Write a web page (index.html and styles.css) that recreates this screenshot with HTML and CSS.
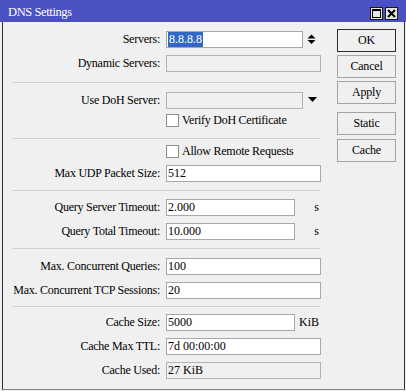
FILE: index.html
```html
<!DOCTYPE html>
<html>
<head>
<meta charset="utf-8">
<title>DNS Settings</title>
<link rel="stylesheet" href="styles.css">
</head>
<body>
<div class="window">
  <div class="titlebar">
    <span class="title">DNS Settings</span>
    <div class="tbtns">
      <span class="tb">
        <svg width="11" height="11" viewBox="0 0 11 11"><rect x="1.5" y="1.5" width="8" height="8" fill="none" stroke="#000" stroke-width="1"/><rect x="1" y="1" width="9" height="2" fill="#000"/></svg>
      </span>
      <span class="tb">
        <svg width="11" height="11" viewBox="0 0 11 11"><path d="M2 2 L9 9 M9 2 L2 9" stroke="#000" stroke-width="2"/></svg>
      </span>
    </div>
  </div>
  <div class="frame">
    <div class="form">
      <div class="row">
        <span class="label">Servers:</span>
        <div class="field">
          <span class="input mid"><span class="sel">8.8.8.8</span></span>
          <svg class="spin" width="9" height="11" viewBox="0 0 9 11"><path d="M0.5 4.5 L8.5 4.5 L4.5 0.5 Z M0.5 6 L8.5 6 L4.5 10 Z" fill="#000"/></svg>
        </div>
      </div>
      <div class="row">
        <span class="label">Dynamic Servers:</span>
        <div class="field"><span class="input full disabled"></span></div>
      </div>
      <div class="sep s1"></div>
      <div class="row">
        <span class="label">Use DoH Server:</span>
        <div class="field">
          <span class="input mid disabled"></span>
          <svg class="drop" width="9" height="5" viewBox="0 0 9 5"><path d="M0 0 L9 0 L4.5 5 Z" fill="#000"/></svg>
        </div>
      </div>
      <div class="cbrow verify"><span class="cb"></span><span>Verify DoH Certificate</span></div>
      <div class="sep s2"></div>
      <div class="cbrow allow"><span class="cb"></span><span>Allow Remote Requests</span></div>
      <div class="row">
        <span class="label">Max UDP Packet Size:</span>
        <div class="field"><span class="input full">512</span></div>
      </div>
      <div class="sep s3"></div>
      <div class="row">
        <span class="label">Query Server Timeout:</span>
        <div class="field"><span class="input short">2.000</span><span class="unit">s</span></div>
      </div>
      <div class="row">
        <span class="label">Query Total Timeout:</span>
        <div class="field"><span class="input short">10.000</span><span class="unit">s</span></div>
      </div>
      <div class="sep s4"></div>
      <div class="row">
        <span class="label">Max. Concurrent Queries:</span>
        <div class="field"><span class="input full">100</span></div>
      </div>
      <div class="row">
        <span class="label">Max. Concurrent TCP Sessions:</span>
        <div class="field"><span class="input full">20</span></div>
      </div>
      <div class="sep s5"></div>
      <div class="row">
        <span class="label">Cache Size:</span>
        <div class="field"><span class="input short">5000</span><span class="unit">KiB</span></div>
      </div>
      <div class="row">
        <span class="label">Cache Max TTL:</span>
        <div class="field"><span class="input full">7d 00:00:00</span></div>
      </div>
      <div class="row">
        <span class="label">Cache Used:</span>
        <div class="field"><span class="input full disabled">27 KiB</span></div>
      </div>
    </div>
    <div class="buttons">
      <div class="btn default">OK</div>
      <div class="btn">Cancel</div>
      <div class="btn">Apply</div>
      <div class="btn gapped">Static</div>
      <div class="btn">Cache</div>
    </div>
  </div>
</div>
</body>
</html>
```
FILE: styles.css
```css
* { box-sizing: border-box; }
html, body { margin: 0; padding: 0; }
body {
  width: 406px;
  height: 391px;
  overflow: hidden;
  background: #f0f0f0;
  font-family: "Liberation Serif", "Times New Roman", serif;
  font-size: 12px;
  color: #000;
}
.window {
  width: 406px;
  height: 391px;
  display: flex;
  flex-direction: column;
  background: #f0f0f0;
}
.titlebar {
  height: 22px;
  flex: none;
  background: #4b50c2;
  color: #fff;
  display: flex;
  align-items: flex-start;
  justify-content: space-between;
  padding: 0 8px 0 8px;
}
.title {
  margin-top: 5px;
  line-height: 14px;
  font-size: 12.5px;
  letter-spacing: -0.4px;
}
.tbtns { display: flex; gap: 2px; margin-top: 7px; }
.tb {
  width: 13px;
  height: 13px;
  background: #e6e6e6;
  border: 1px solid #1a1a1a;
  display: flex;
}
.tb svg { display: block; }

.frame {
  flex: 1;
  margin: 0 1px 1px 2px;
  border-left: 1px solid #303030;
  border-right: 1px solid #303030;
  border-bottom: 1px solid #808080;
  display: flex;
}
.form { width: 322px; padding-top: 6px; }
.row {
  display: grid;
  grid-template-columns: 157px 155px;
  column-gap: 6px;
  height: 24px;
  padding-top: 3px;
  align-items: start;
}
.label {
  text-align: right;
  line-height: 17px;
  letter-spacing: -0.25px;
  white-space: nowrap;
}
.field { display: flex; align-items: center; height: 17px; }
.input {
  display: block;
  height: 17px;
  border: 1px solid #a8a8a8;
  background: #fff;
  line-height: 15px;
  padding-left: 1px;
  white-space: nowrap;
  overflow: hidden;
}
.input.full { width: 155px; }
.input.mid { width: 137px; }
.input.short { width: 129px; }
.input.disabled { background: #f0f0f0; border-color: #b2b2b2; }
.sel {
  display: inline-block;
  height: 15px;
  background: #3168c4;
  color: #fff;
  padding: 0 1px;
}
.spin { margin-left: 4px; }
.drop { margin-left: 5px; margin-top: -2px; }
.unit { flex: 1; text-align: right; padding-right: 2px; line-height: 17px; }

.sep {
  height: 1px;
  background: #d2d2d2;
  margin-left: 9px;
  width: 308px;
}
.s1 { margin-top: 6px; margin-bottom: 6px; }
.s2 { margin-top: 6px; margin-bottom: 5px; }
.s3 { margin-top: 4px; margin-bottom: 5px; }
.s4 { margin-top: 4px; margin-bottom: 6px; }
.s5 { margin-top: 3px; margin-bottom: 4px; }

.cbrow {
  display: flex;
  align-items: flex-start;
  padding-left: 163px;
  padding-top: 1px;
  line-height: 13px;
  letter-spacing: -0.25px;
  white-space: nowrap;
}
.verify { height: 19px; }
.allow { height: 18px; }
.cb {
  width: 13px;
  height: 13px;
  border: 1px solid #8e8e8e;
  background: #fff;
  margin-right: 3px;
  flex: none;
}

.buttons {
  margin-left: 12px;
  padding-top: 7px;
  width: 59px;
  display: flex;
  flex-direction: column;
  gap: 3px;
}
.btn {
  height: 23px;
  border: 1px solid #a4a4a4;
  background: #f0f0f0;
  text-align: center;
  line-height: 21px;
  letter-spacing: -0.2px;
}
.btn.default { border-color: #2c2c2c; }
.btn.gapped { margin-top: 5px; margin-bottom: 1px; }
```
